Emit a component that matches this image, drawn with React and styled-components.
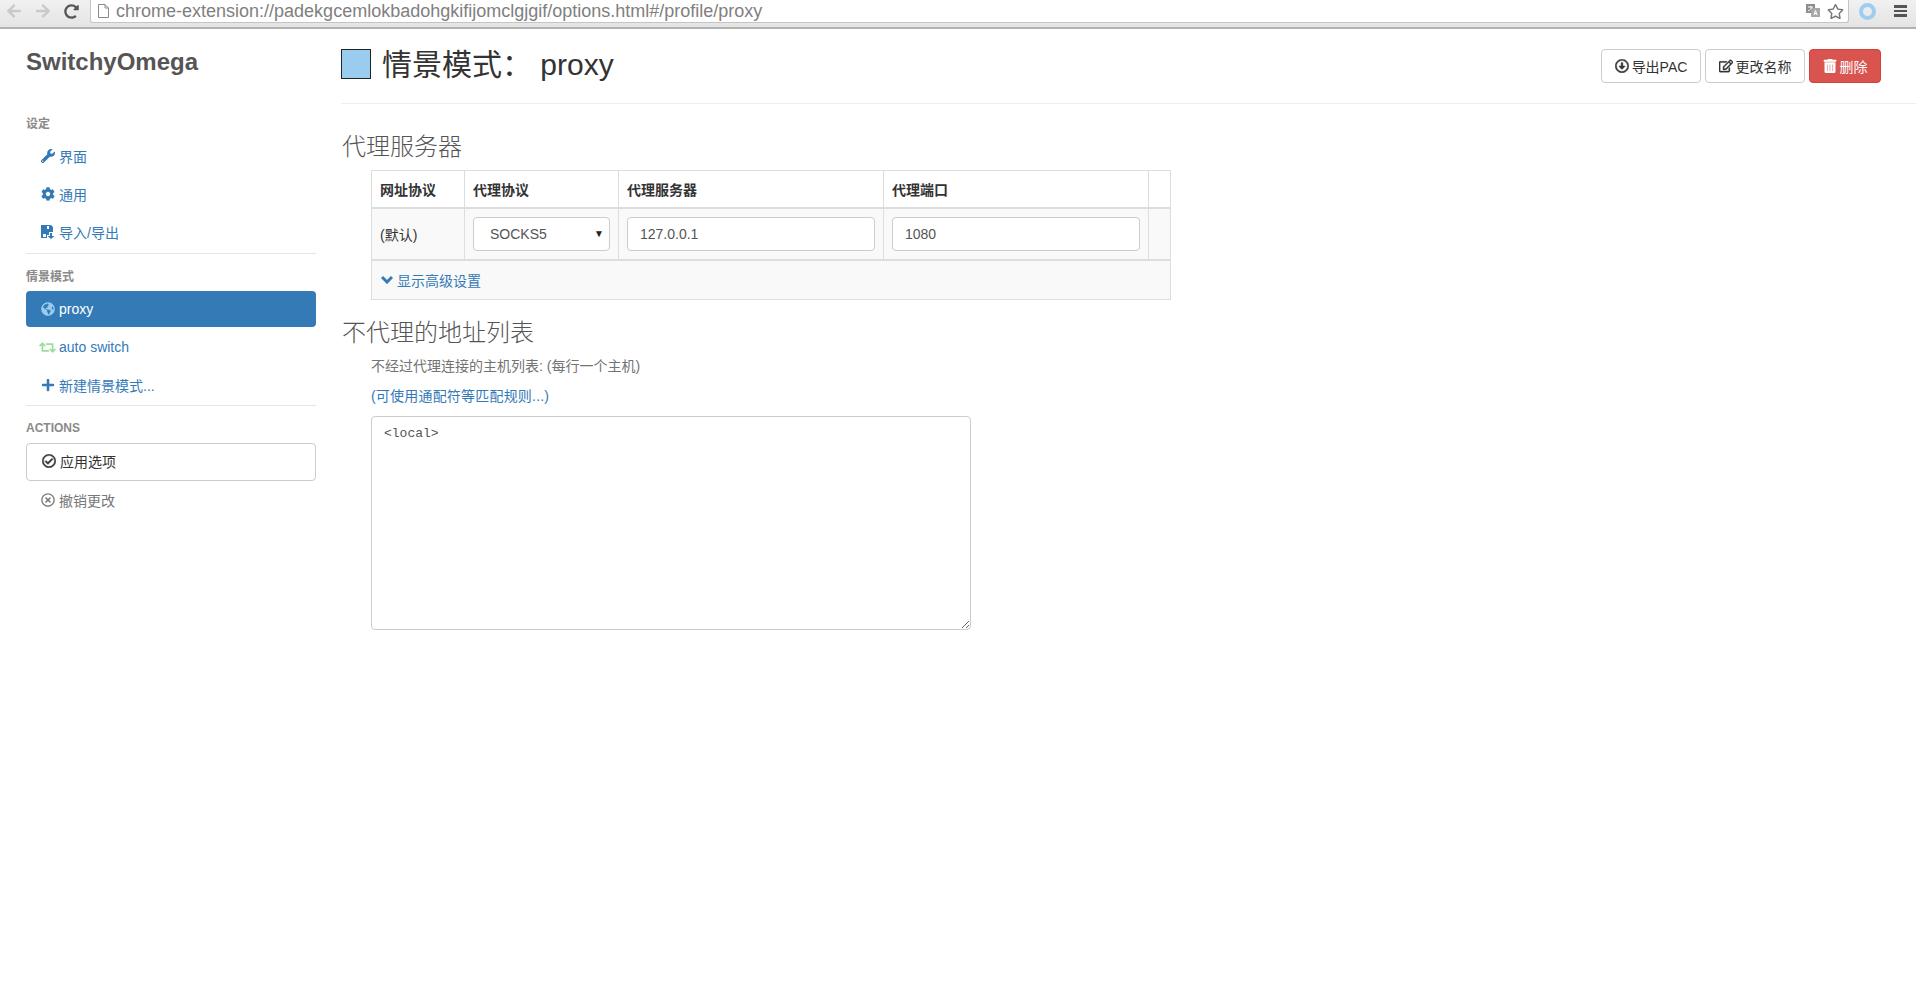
import React from "react";
import styled, { createGlobalStyle } from "styled-components";
import {
  FaWrench, FaCog, FaGlobeAmericas, FaRetweet, FaPlus, FaRegCheckCircle, FaRegTimesCircle,
  FaRegArrowAltCircleDown, FaRegEdit, FaTrashAlt, FaRegStar, FaRedoAlt, FaArrowLeft, FaArrowRight,
} from "react-icons/fa";

const GlobalStyle = createGlobalStyle`
    html, body { margin: 0; padding: 0; background: #fff; }
    body {
        font-family: "Liberation Sans", "Noto Sans CJK SC", sans-serif;
        font-size: 14px;
        color: #333;
    }
    * { box-sizing: border-box; }
`

const ChromeBar = styled.div`
    height: 29px;
    display: flex;
    background: linear-gradient(#f1f1f1, #e4e4e4);
    border-bottom: 2px solid #b2b2b2;
`
const NavIcons = styled.div`
    width: 90px;
    display: flex;
    align-items: center;
    padding: 0 0 5px 6px;
    gap: 13px;
`
const NavBtn = styled.span`
    display: flex;
    color: ${(p) => (p.$on ? "#555" : "#c9c9cc")};
    font-size: ${(p) => (p.$on ? "15px" : "16px")};
`
const UrlBox = styled.div`
    flex: 1;
    height: 23px;
    display: flex;
    align-items: center;
    background: #fff;
    border: 1px solid #c4c4c4;
    border-top: 0;
    border-radius: 0 0 3px 3px;
    padding: 0 4px 0 7px;
`
const UrlText = styled.span`
    flex: 1;
    margin-left: 7px;
    font-size: 18px;
    color: #808080;
    white-space: nowrap;
`
const UrlRight = styled.div`
    display: flex;
    align-items: center;
    gap: 7px;
`
const Extras = styled.div`
    width: 67px;
    display: flex;
    align-items: center;
    padding: 0 0 5px 10px;
    gap: 18px;
`
const ExtRing = styled.span`
    width: 17px;
    height: 17px;
    border-radius: 50%;
    border: 4px solid #9ccef2;
`
const Burger = styled.span`
    width: 13px;
    height: 12px;
    border-top: 3px solid #555;
    border-bottom: 3px solid #555;
    display: flex;
    align-items: center;
    &::before { content: ""; width: 100%; height: 2px; background: #555; }
`

const Page = styled.div`
    display: flex;
    padding-left: 26px;
`
const Sidebar = styled.nav`
    width: 290px;
    flex: none;
`
const Logo = styled.h1`
    margin: 0;
    padding-top: 18px;
    height: 88px;
    font-size: 24px;
    line-height: 30px;
    font-weight: bold;
    color: #555;
`
const NavHeader = styled.div`
    height: ${(p) => (p.$first ? "21px" : "37px")};
    padding-top: ${(p) => (p.$first ? "0" : p.$tight ? "15px" : "16px")};
    font-size: 12px;
    line-height: 14px;
    font-weight: bold;
    color: #8a8a8a;
`
const Item = styled.a`
    height: 36px;
    margin-bottom: 2px;
    display: flex;
    align-items: center;
    padding-left: ${(p) => (p.$wide ? "13px" : "15px")};
    padding-bottom: ${(p) => (p.$muted ? "2px" : "0")};
    gap: ${(p) => (p.$wide ? "3px" : "4px")};
    border-radius: 4px;
    color: ${(p) => (p.$active ? "#fff" : p.$muted ? "#777" : "#337ab7")};
    background: ${(p) => (p.$active ? "#337ab7" : "transparent")};
    svg { font-size: ${(p) => (p.$wide ? "17px" : "14px")}; flex: none; color: ${(p) => p.$tint || "inherit"}; }
`
const ApplyButton = styled.button`
    width: 100%;
    height: 38px;
    margin-bottom: 2px;
    display: flex;
    align-items: center;
    gap: 4px;
    padding: 0 0 2px 15px;
    background: #fff;
    border: 1px solid #ccc;
    border-radius: 4px;
    font: inherit;
    color: #333;
    svg { font-size: 14px; stroke: currentColor; stroke-width: 16px; }
`
const Divider = styled.hr`
    margin: ${(p) => (p.$spaced ? "3px" : "0")} 0 0;
    border: 0;
    border-top: 1px solid #e5e5e5;
    height: 1px;
`

const Main = styled.main`
    flex: 1;
    margin-left: 25px;
`
const PageHeader = styled.header`
    height: 75px;
    display: flex;
    justify-content: space-between;
    border-bottom: 1px solid #eee;
`
const TitleWrap = styled.div`
    display: flex;
    align-items: center;
    height: 60px;
    padding-top: 10px;
`
const Swatch = styled.span`
    width: 30px;
    height: 30px;
    background: #99ccee;
    border: 1px solid #222;
    margin-right: 11px;
`
const Title = styled.h2`
    margin: 0;
    padding-top: 2px;
    font-size: 30px;
    font-weight: 400;
    color: #333;
    line-height: 40px;
    white-space: pre;
`
const Actions = styled.div`
    display: flex;
    gap: 4px;
    padding: 20px 35px 0 0;
`
const ActionBtn = styled.button`
    width: ${(p) => p.$w}px;
    height: 34px;
    display: flex;
    align-items: center;
    justify-content: center;
    gap: 3px;
    padding: 0;
    border-radius: 4px;
    font: inherit;
    color: ${(p) => (p.$danger ? "#fff" : "#333")};
    background: ${(p) => (p.$danger ? "#d9534f" : "#fff")};
    border: 1px solid ${(p) => (p.$danger ? "#d43f3a" : "#ccc")};
    svg { font-size: 14px; stroke: currentColor; stroke-width: 16px; }
`
const Section = styled.h3`
    margin: 0;
    font-size: 24px;
    font-weight: 300;
    color: #555;
    line-height: 30px;
`
const FirstSection = styled(Section)`
    padding: 28px 0 8px 1px;
    height: 66px;
`
const SecondSection = styled(Section)`
    padding: 18px 0 0 1px;
    height: 51px;
`
const Indent = styled.div`
    margin-left: 30px;
    width: 800px;
`
const Table = styled.table`
    width: 799px;
    border-collapse: collapse;
    table-layout: fixed;
    border: 1px solid #ddd;
`
const Th = styled.th`
    width: ${(p) => p.$w}px;
    height: 37px;
    padding: 0 8px;
    text-align: left;
    font-size: 14px;
    color: #333;
    border: 1px solid #ddd;
    border-bottom: 2px solid #ddd;
`
const Td = styled.td`
    height: 52px;
    padding: 0 8px;
    background: #f9f9f9;
    border: 1px solid #ddd;
    font-size: 14px;
`
const FooterCell = styled.td`
    height: 40px;
    padding: 0 9px;
    background: #f9f9f9;
    border-top: 2px solid #ddd;
`
const TextLink = styled.a`
    display: inline-flex;
    align-items: center;
    gap: 4px;
    color: #337ab7;
`
const Field = styled.input`
    width: 100%;
    height: 34px;
    padding: 0 12px;
    font: inherit;
    font-size: 14px;
    color: #555;
    background: #fff;
    border: 1px solid #ccc;
    border-radius: 4px;
    display: block;
`
const SelectBox = styled.div`
    height: 34px;
    display: flex;
    align-items: center;
    justify-content: space-between;
    padding: 0 5px 0 16px;
    font-size: 14px;
    color: #555;
    background: #fff;
    border: 1px solid #ccc;
    border-radius: 4px;
    &::after { content: "▼"; font-size: 10px; color: #222; }
`
const HelpText = styled.p`
    margin: 0;
    height: 30px;
    line-height: 30px;
    color: #737373;
`
const HelpLink = styled(HelpText)`
    color: #337ab7;
    height: 35px;
    letter-spacing: 0.2px;
`
const Bypass = styled.textarea`
    display: block;
    width: 600px;
    height: 214px;
    padding: 8px 12px;
    font-family: "Liberation Mono", monospace;
    font-size: 13px;
    line-height: 17px;
    color: #555;
    border: 1px solid #ccc;
    border-radius: 4px;
`

const FloppyIcon = () => (
  <svg width="14" height="14" viewBox="0 0 14 14" fill="currentColor">
    <path d="M0 0h10l2 2v5H8v3H6v3H0zM6 1v3h2V1zM2 9v3h3V9z" fillRule="evenodd" />
    <path d="M9 8h2v3h2.500L10 14l-3.500-3H9z" />
  </svg>
);

const ChevronIcon = () => (
  <svg width="12" height="9" viewBox="0 0 12 9" fill="none" stroke="currentColor" strokeWidth="3">
    <path d="M1 2l5 5 5-5" />
  </svg>
);

const TranslateIcon = () => (
  <svg width="14" height="14" viewBox="0 0 14 14">
    <rect x="0" y="0" width="9" height="9" fill="#8d8d8d" />
    <rect x="5" y="4" width="9" height="9" fill="#a8a8a8" />
    <path d="M2 3h5M4.500 2v1M6 3C5 5 4 6 2 7" stroke="#fff" fill="none" />
    <path d="M8 11l1.500-4.500L11 11M8.500 9.500h2" stroke="#fff" fill="none" />
  </svg>
);

const FileIcon = () => (
  <svg width="11" height="14" viewBox="0 0 11 14" fill="none" stroke="#8a8a8a">
    <path d="M.5.500h6.500l3.500 3.500v9.500h-10zM7 .500V4h3.500" />
  </svg>
);

const App = () => {
  return (
    <>
      <GlobalStyle />
      <ChromeBar>
        <NavIcons>
          <NavBtn><FaArrowLeft /></NavBtn>
          <NavBtn><FaArrowRight /></NavBtn>
          <NavBtn $on><FaRedoAlt /></NavBtn>
        </NavIcons>
        <UrlBox>
          <FileIcon />
          <UrlText>chrome-extension://padekgcemlokbadohgkifijomclgjgif/options.html#/profile/proxy</UrlText>
          <UrlRight>
            <TranslateIcon />
            <FaRegStar color="#777" size={17} />
          </UrlRight>
        </UrlBox>
        <Extras>
          <ExtRing />
          <Burger />
        </Extras>
      </ChromeBar>
      <Page>
        <Sidebar>
          <Logo>SwitchyOmega</Logo>
          <NavHeader $first>设定</NavHeader>
          <Item><FaWrench />界面</Item>
          <Item><FaCog />通用</Item>
          <Item><FloppyIcon />导入/导出</Item>
          <Divider $spaced />
          <NavHeader>情景模式</NavHeader>
          <Item $active $tint="#99ccee"><FaGlobeAmericas />proxy</Item>
          <Item $wide $tint="#99dd99"><FaRetweet />auto switch</Item>
          <Item><FaPlus />新建情景模式...</Item>
          <Divider />
          <NavHeader $tight>ACTIONS</NavHeader>
          <ApplyButton><FaRegCheckCircle />应用选项</ApplyButton>
          <Item $muted><FaRegTimesCircle />撤销更改</Item>
        </Sidebar>
        <Main>
          <PageHeader>
            <TitleWrap>
              <Swatch />
              <Title>情景模式： proxy</Title>
            </TitleWrap>
            <Actions>
              <ActionBtn $w={100}><FaRegArrowAltCircleDown />导出PAC</ActionBtn>
              <ActionBtn $w={100}><FaRegEdit />更改名称</ActionBtn>
              <ActionBtn $w={72} $danger><FaTrashAlt />删除</ActionBtn>
            </Actions>
          </PageHeader>
          <FirstSection>代理服务器</FirstSection>
          <Indent>
            <Table>
              <thead>
                <tr>
                  <Th $w={93}>网址协议</Th>
                  <Th $w={154}>代理协议</Th>
                  <Th $w={265}>代理服务器</Th>
                  <Th $w={265}>代理端口</Th>
                  <Th $w={22} />
                </tr>
              </thead>
              <tbody>
                <tr>
                  <Td>(默认)</Td>
                  <Td><SelectBox>SOCKS5</SelectBox></Td>
                  <Td><Field defaultValue="127.0.0.1" /></Td>
                  <Td><Field defaultValue="1080" /></Td>
                  <Td />
                </tr>
                <tr>
                  <FooterCell colSpan={5}>
                    <TextLink><ChevronIcon />显示高级设置</TextLink>
                  </FooterCell>
                </tr>
              </tbody>
            </Table>
          </Indent>
          <SecondSection>不代理的地址列表</SecondSection>
          <Indent>
            <HelpText>不经过代理连接的主机列表: (每行一个主机)</HelpText>
            <HelpLink>(可使用通配符等匹配规则...)</HelpLink>
            <Bypass defaultValue="<local>" />
          </Indent>
        </Main>
      </Page>
    </>
  );
};

export default App;
